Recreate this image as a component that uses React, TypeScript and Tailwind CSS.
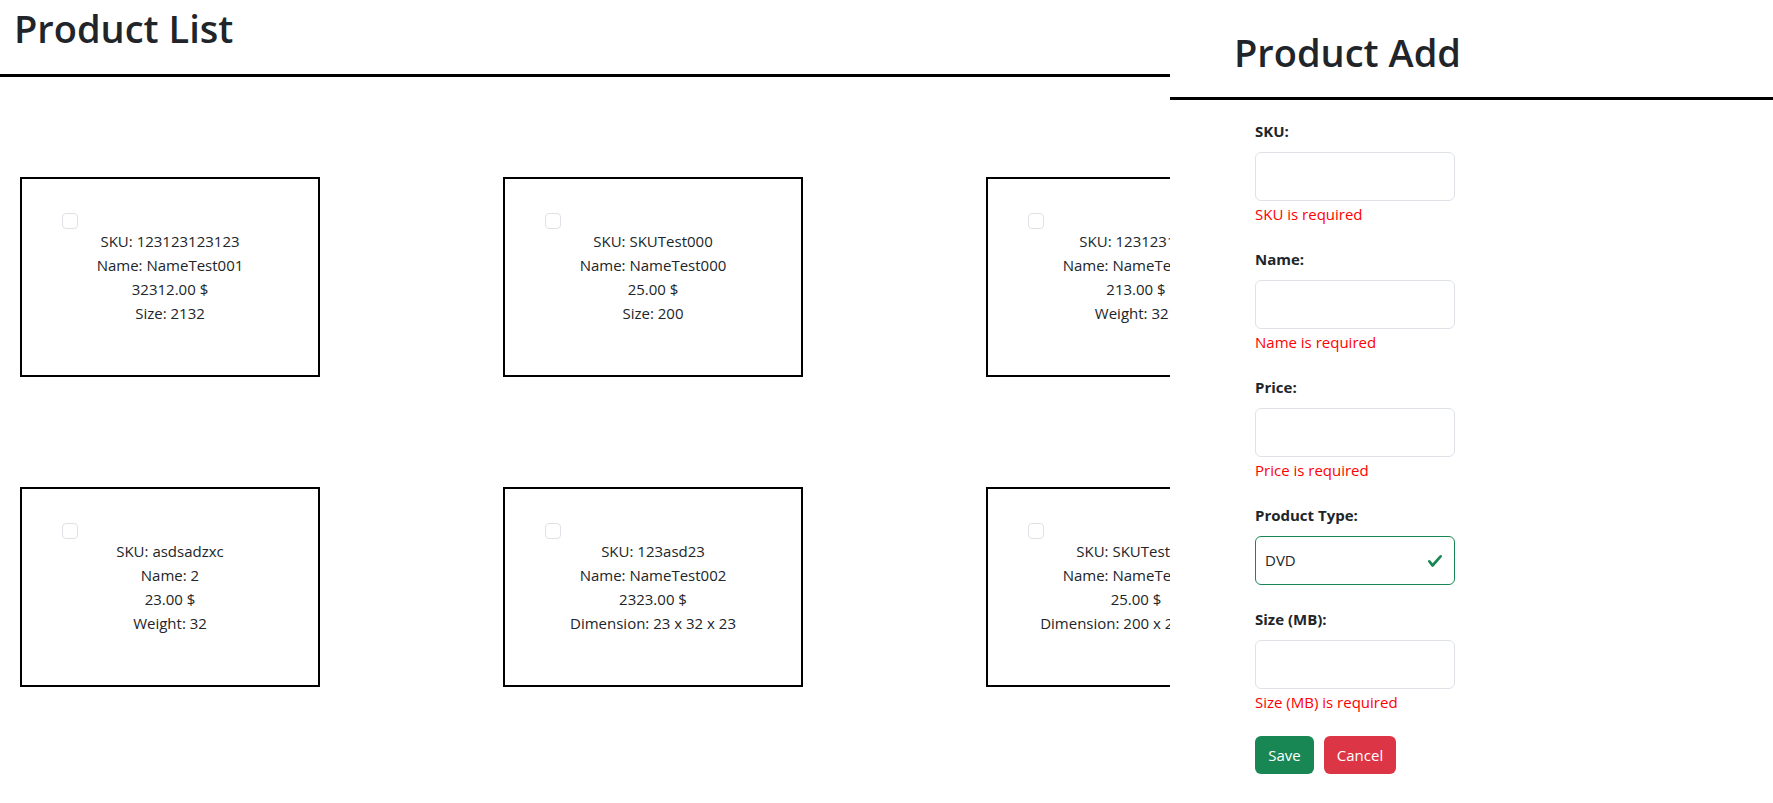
import React from "react";

type Product = { sku: string; name: string; price: string; attr: string };

const products: Product[] = [
  { sku: "123123123123", name: "NameTest001", price: "32312.00 $", attr: "Size: 2132" },
  { sku: "SKUTest000", name: "NameTest000", price: "25.00 $", attr: "Size: 200" },
  { sku: "123123123", name: "NameTest003", price: "213.00 $", attr: "Weight: 321" },
  { sku: "asdsadzxc", name: "2", price: "23.00 $", attr: "Weight: 32" },
  { sku: "123asd23", name: "NameTest002", price: "2323.00 $", attr: "Dimension: 23 x 32 x 23" },
  { sku: "SKUTest001", name: "NameTest004", price: "25.00 $", attr: "Dimension: 200 x 200 x 200" },
];

function Card({ p }: { p: Product }) {
  return (
    <div className="flex h-[200px] flex-col border-2 border-black">
      <div className="pl-[40px] pt-[34px]">
        <span className="block h-4 w-4 rounded-[4px] border border-[#dee2e6] bg-white" />
      </div>
      <div className="text-center text-[15px] leading-6">
        <div>SKU: {p.sku}</div>
        <div>Name: {p.name}</div>
        <div>{p.price}</div>
        <div>{p.attr}</div>
      </div>
    </div>
  );
}

function Field({ label, error, mb }: { label: string; error: string; mb: string }) {
  return (
    <div className={mb}>
      <label className="mb-[11px] block font-bold leading-[20px]">{label}</label>
      <input
        type="text"
        className="block h-[49px] w-[200px] rounded-md border border-[#dee2e6] bg-white px-[9px] outline-none"
      />
      <div className="mt-[1px] leading-6 text-[#ff0000]">{error}</div>
    </div>
  );
}

export default function App() {
  return (
    <div className="relative h-[803px] w-full overflow-hidden bg-white font-['Open_Sans',sans-serif] text-[15px] text-[#212529]">
      <header className="border-b-[3px] border-black pb-[23px] pl-[14px] pt-[6px]">
        <h1 className="text-[38px] font-semibold leading-[45px]">Product List</h1>
      </header>
      <main className="grid grid-cols-[repeat(3,300px)] gap-x-[183px] gap-y-[110px] pl-[20px] pt-[100px]">
        {products.map((p, i) => (
          <Card key={i} p={p} />
        ))}
      </main>

      <aside className="absolute inset-y-0 right-0 w-[603px] bg-white">
        <div className="border-b-[3px] border-black pb-[22px] pl-[64px] pt-[30px]">
          <h1 className="text-[38px] font-semibold leading-[45px]">Product Add</h1>
        </div>
        <form className="pl-[85px] pt-[21px]" onSubmit={(e) => e.preventDefault()}>
          <Field label="SKU:" error="SKU is required" mb="mb-[23px]" />
          <Field label="Name:" error="Name is required" mb="mb-[23px]" />
          <Field label="Price:" error="Price is required" mb="mb-[23px]" />
          <div className="mb-[24px]">
            <label className="mb-[11px] block font-bold leading-[20px]">Product Type:</label>
            <div className="flex h-[49px] w-[200px] items-center justify-between rounded-md border border-[#198754] pl-[9px] pr-[11px]">
              <span>DVD</span>
              <svg width="16" height="16" viewBox="0 0 8 8" aria-hidden="true">
                <path
                  fill="#198754"
                  d="M2.3 6.73.6 4.53c-.4-1.04.46-1.4 1.1-.8l1.1 1.4 3.4-3.8c.6-.63 1.6-.27 1.2.7l-4 4.6c-.43.5-.8.4-1.1.1z"
                />
              </svg>
            </div>
          </div>
          <Field label="Size (MB):" error="Size (MB) is required" mb="mb-[22px]" />
          <div className="flex gap-[10px]">
            <button type="submit" className="h-[38px] w-[59px] rounded-md bg-[#198754] text-white">
              Save
            </button>
            <button type="button" className="h-[38px] w-[72px] rounded-md bg-[#dc3545] text-white">
              Cancel
            </button>
          </div>
        </form>
      </aside>
    </div>
  );
}
